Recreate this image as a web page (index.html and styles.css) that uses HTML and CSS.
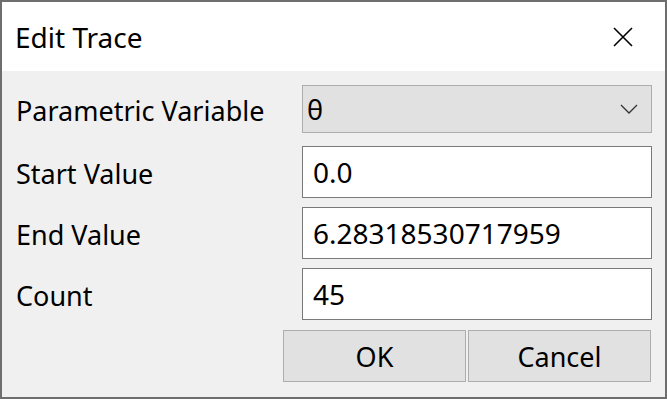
FILE: index.html
```html
<!DOCTYPE html>
<html>
<head>
    <title>Edit Trace</title>
    <link rel="stylesheet" href="styles.css">
</head>
<body>
    <div class="window">
        <div class="titlebar">
            <span class="title">Edit Trace</span>
            <svg class="close" width="20" height="20" viewBox="0 0 20 20">
                <path d="M1 1 L19 19 M19 1 L1 19" stroke="#000" stroke-width="1.6" fill="none"/>
            </svg>
        </div>

        <div class="form">
            <div class="row row-combo">
                <label class="label">Parametric Variable</label>
                <div class="combo">
                    <span>θ</span>
                    <svg class="chevron" width="18" height="10" viewBox="0 0 18 10">
                        <path d="M1 1 L9 9 L17 1" stroke="#333" stroke-width="1.3" fill="none"/>
                    </svg>
                </div>
            </div>
            <div class="row">
                <label class="label" for="start">Start Value</label>
                <input class="field" type="text" id="start" value="0.0">
            </div>
            <div class="row">
                <label class="label" for="end">End Value</label>
                <input class="field" type="text" id="end" value="6.28318530717959">
            </div>
            <div class="row row-last">
                <label class="label" for="count">Count</label>
                <input class="field" type="text" id="count" value="45">
            </div>
            <div class="buttons">
                <button>OK</button>
                <button>Cancel</button>
            </div>
        </div>
    </div>
</body>
</html>
```

FILE: styles.css
```css
body {
    margin: 0;
    font-family: "Noto Sans", "Open Sans", sans-serif;
}

.window {
    width: 667px;
    height: 399px;
    box-sizing: border-box;
    border: 2px solid #6e6e6e;
    background-color: #f0f0f0;
    display: flex;
    flex-direction: column;
}

.titlebar {
    height: 69px;
    background-color: #ffffff;
    display: flex;
    align-items: center;
    justify-content: space-between;
    padding: 0 32px 0 13px;
}

.title {
    font-size: 28px;
    color: #000;
}

.close {
    display: block;
}

.form {
    padding: 14px 13px 0 14px;
}

.row {
    display: flex;
    align-items: center;
    height: 52px;
    margin-bottom: 9px;
}

.row-combo {
    height: 48px;
    margin-bottom: 13px;
}

.row-last {
    margin-bottom: 10px;
}

.label {
    width: 286px;
    flex: none;
    font-size: 27px;
    color: #000;
    padding-top: 3px;
}

.combo {
    flex: 1;
    height: 48px;
    box-sizing: border-box;
    border: 1px solid #adadad;
    background-color: #e1e1e1;
    display: flex;
    align-items: center;
    justify-content: space-between;
    padding: 0 13px 0 4px;
    font-size: 27px;
}

.chevron {
    display: block;
}

.field {
    flex: 1;
    height: 52px;
    box-sizing: border-box;
    border: 1px solid #7a7a7a;
    background-color: #fff;
    padding: 0 10px;
    font-family: inherit;
    font-size: 28px;
    color: #000;
    outline: none;
    min-width: 0;
}

.buttons {
    display: flex;
    justify-content: flex-end;
    gap: 2px;
    margin-right: 1px;
}

button {
    width: 183px;
    height: 52px;
    border: 1px solid #adadad;
    background-color: #e1e1e1;
    font-family: inherit;
    font-size: 27px;
    color: #000;
    padding: 0;
}
```
